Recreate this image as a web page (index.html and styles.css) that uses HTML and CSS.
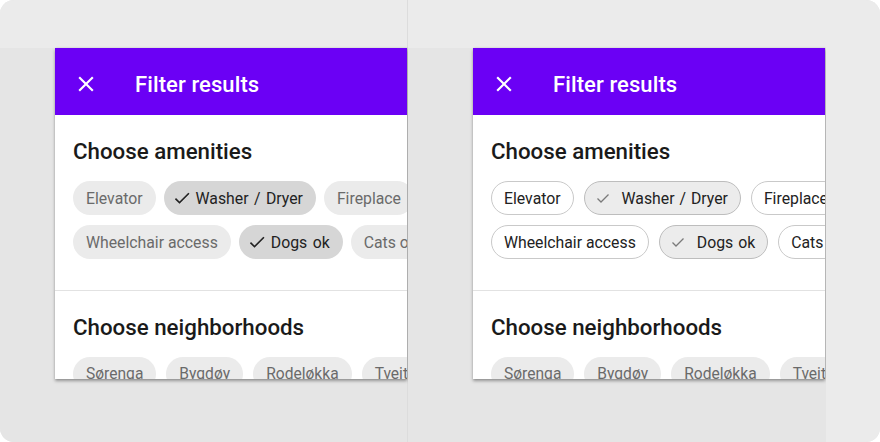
FILE: index.html
```html
<!DOCTYPE html>
<html>
<head>
<meta charset="utf-8">
<link rel="stylesheet" href="styles.css">
</head>
<body>
<div class="frame">
  <div class="col col-left">
    <div class="band"></div>
    <div class="stage stage-left">
      <div class="panel">
        <div class="appbar">
          <svg class="close" viewBox="0 0 24 24" width="26" height="26"><path fill="#fff" d="M19 6.41L17.59 5 12 10.59 6.41 5 5 6.41 10.59 12 5 17.59 6.41 19 12 13.41 17.59 19 19 17.59 13.41 12z"/></svg>
          <span class="appbar-title">Filter results</span>
        </div>
        <div class="section">
          <h2 class="section-title">Choose amenities</h2>
          <div class="chips">
            <span class="chip">Elevator</span>
            <span class="chip chip-on"><svg class="check" viewBox="0 0 24 24" width="20" height="20"><path fill="#222" d="M9 16.17L4.83 12l-1.42 1.41L9 19 21 7l-1.41-1.41z"/></svg>Washer / Dryer</span>
            <span class="chip">Fireplace</span>
            <span class="chip">Balcony</span>
          </div>
          <div class="chips">
            <span class="chip">Wheelchair access</span>
            <span class="chip chip-on"><svg class="check" viewBox="0 0 24 24" width="20" height="20"><path fill="#222" d="M9 16.17L4.83 12l-1.42 1.41L9 19 21 7l-1.41-1.41z"/></svg>Dogs ok</span>
            <span class="chip">Cats ok</span>
          </div>
        </div>
        <div class="divider"></div>
        <div class="section section-2">
          <h2 class="section-title">Choose neighborhoods</h2>
          <div class="chips chips-wide chips-area">
            <span class="chip">Sørenga</span>
            <span class="chip">Bygdøy</span>
            <span class="chip">Rodeløkka</span>
            <span class="chip">Tveita</span>
          </div>
        </div>
      </div>
    </div>
  </div>
  <div class="col col-mid">
    <div class="band"></div>
    <div class="stage stage-mid">
      <div class="panel">
        <div class="appbar">
          <svg class="close" viewBox="0 0 24 24" width="26" height="26"><path fill="#fff" d="M19 6.41L17.59 5 12 10.59 6.41 5 5 6.41 10.59 12 5 17.59 6.41 19 12 13.41 17.59 19 19 17.59 13.41 12z"/></svg>
          <span class="appbar-title">Filter results</span>
        </div>
        <div class="section">
          <h2 class="section-title">Choose amenities</h2>
          <div class="chips chips-wide">
            <span class="chip chip-out">Elevator</span>
            <span class="chip chip-out chip-out-on"><svg class="check-thin" viewBox="0 0 16 16" width="16" height="16"><polyline points="2.5,8.5 6,12 13.5,4.5" fill="none" stroke="#7a7a7a" stroke-width="1.3"/></svg>Washer / Dryer</span>
            <span class="chip chip-out">Fireplace</span>
            <span class="chip chip-out">Balcony</span>
          </div>
          <div class="chips chips-wide">
            <span class="chip chip-out">Wheelchair access</span>
            <span class="chip chip-out chip-out-on"><svg class="check-thin" viewBox="0 0 16 16" width="16" height="16"><polyline points="2.5,8.5 6,12 13.5,4.5" fill="none" stroke="#7a7a7a" stroke-width="1.3"/></svg>Dogs ok</span>
            <span class="chip chip-out">Cats ok</span>
          </div>
        </div>
        <div class="divider"></div>
        <div class="section section-2">
          <h2 class="section-title">Choose neighborhoods</h2>
          <div class="chips chips-wide chips-area">
            <span class="chip">Sørenga</span>
            <span class="chip">Bygdøy</span>
            <span class="chip">Rodeløkka</span>
            <span class="chip">Tveita</span>
          </div>
        </div>
      </div>
    </div>
  </div>
  <div class="col col-right"></div>
</div>
</body>
</html>
```
FILE: styles.css
```css
* { box-sizing: border-box; }
html, body { margin: 0; padding: 0; background: #ffffff; }
body { width: 880px; height: 442px; overflow: hidden; font-family: Roboto, "Noto Sans", sans-serif; }

.frame {
  width: 880px;
  height: 442px;
  border-radius: 14px;
  overflow: hidden;
  display: flex;
  background: #e6e6e6;
}
.col { display: flex; flex-direction: column; }
.col-left { width: 408px; border-right: 1px solid #dcdcdc; }
.col-mid { width: 418px; }
.col-right { flex: 1; background: #ebebeb; }
.band { height: 48px; background: #ebebeb; flex: none; }
.stage { flex: 1; background: #e5e5e5; }
.stage-left { padding-left: 55px; }
.stage-mid { padding-left: 65px; }

.panel {
  width: 352px;
  height: 331px;
  background: #fff;
  overflow: hidden;
  box-shadow: 0 2px 3px rgba(0,0,0,0.35), 1px 0 2px rgba(0,0,0,0.12);
}
.appbar {
  height: 67px;
  background: #6b00f5;
  display: flex;
  align-items: center;
  padding: 5px 0 0 18px;
  color: #fff;
}
.close { flex: none; margin-top: -1px; }
.appbar-title {
  margin-left: 36px;
  font-size: 22px;
  font-weight: 500;
  letter-spacing: 0.1px;
}
.section { padding: 22px 0 0 18px; }
.section-2 { padding-top: 22px; }
.section-title {
  margin: 0 0 16px;
  font-size: 22.3px;
  font-weight: 500;
  line-height: 28px;
  color: #1a1a1a;
}
.chips { display: flex; gap: 8px; margin-bottom: 10px; white-space: nowrap; }
.chips-wide { gap: 10px; }
.chip {
  flex: none;
  display: inline-flex;
  align-items: center;
  height: 34px;
  padding: 0 13px;
  border-radius: 17px;
  background: #ebebeb;
  color: #6a6a6a;
  font-size: 15.8px;
}
.chips-area .chip { font-size: 15.6px; }
.chip-on {
  background: #d6d6d6;
  color: #222;
  padding-left: 8px;
  word-spacing: 1.5px;
}
.check { margin-right: 4px; }
.chip-out {
  background: #fff;
  border: 1px solid #c9c9c9;
  color: #222;
  padding: 0 12px;
}
.chip-out-on {
  background: #ececec;
  border-color: #bdbdbd;
  padding-left: 10px;
  word-spacing: 1px;
}
.check-thin { margin-right: 11px; }
.divider { height: 1px; background: #e2e2e2; margin-top: 31px; }
```
